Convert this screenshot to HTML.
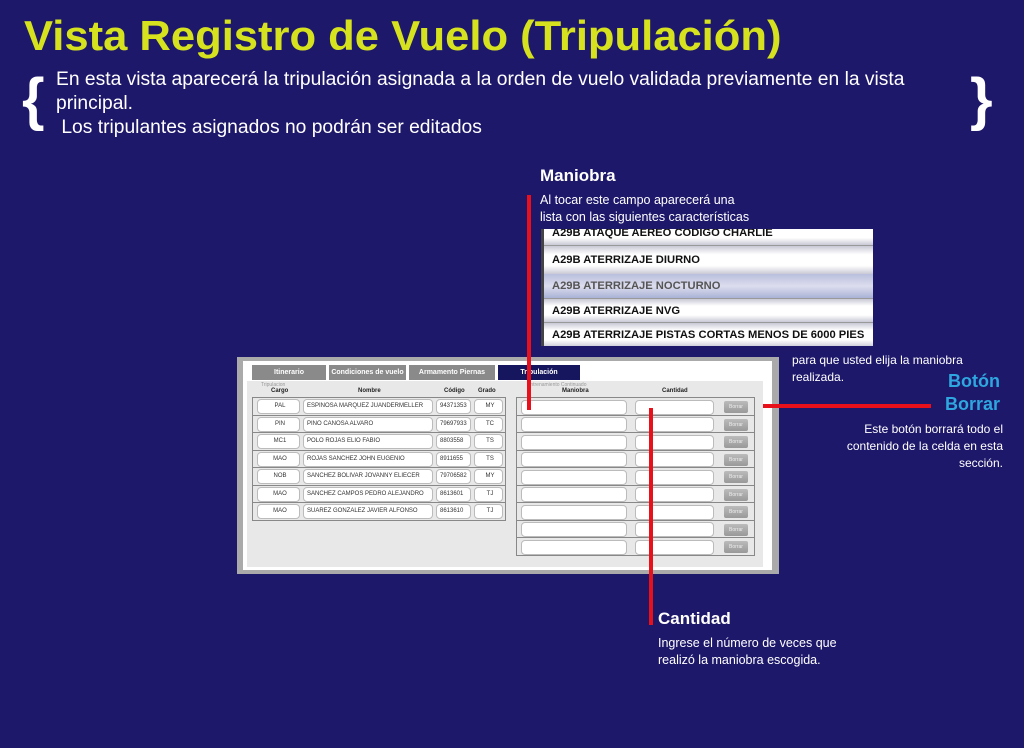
<!DOCTYPE html>
<html><head><meta charset="utf-8"><style>
*{margin:0;padding:0;box-sizing:border-box}
body{width:1024px;height:748px;background:#1e186b;position:relative;overflow:hidden;font-family:"Liberation Sans",sans-serif;color:#fff}
.a{position:absolute}
.t{white-space:nowrap}
.cell{position:absolute;background:#fff;border:1px solid #bbb;border-radius:4px;height:15px;font-size:6px;color:#333;line-height:13px;padding-left:3px}
.row{position:absolute;border-bottom:1px solid #888;border-left:1px solid #888;border-right:1px solid #888;height:17.5px}
.btn{position:absolute;width:24px;height:12px;border-radius:2px;background:linear-gradient(#bbb,#999);font-size:5px;color:#eee;text-align:center;line-height:12px}
.tab{position:absolute;top:365px;height:15px;background:#8a8a8a;color:#fff;font-size:7px;font-weight:bold;text-align:center;line-height:15px}
.dd{position:absolute;left:0;width:332px;height:24.5px;font-size:11.2px;font-weight:bold;color:#111;padding-left:8px;line-height:24px;background:linear-gradient(#c9c9d6,#fff 30%,#fff 70%,#c9c9d6);border-bottom:1px solid #999}
</style></head><body>
<div class="a t" style="left:24px;top:12px;font-size:42px;font-weight:bold;color:#d5e21d;transform:scaleX(1.037);transform-origin:0 0">Vista Registro de Vuelo (Tripulación)</div>
<div class="a" style="left:22px;top:66px;font-size:58px;font-weight:bold">{</div>
<div class="a" style="left:970px;top:66px;font-size:58px;font-weight:bold">}</div>
<div class="a t" style="left:56px;top:68px;font-size:19px;line-height:24px;transform:scaleX(1.013);transform-origin:0 0">En esta vista aparecerá la tripulación asignada a la orden de vuelo validada previamente en la vista<br>principal.<br>&nbsp;Los tripulantes asignados no podrán ser editados</div>

<div class="a t" style="left:540px;top:166px;font-size:17px;font-weight:bold">Maniobra</div>
<div class="a t" style="left:540px;top:192px;font-size:12.5px;line-height:17px">Al tocar este campo aparecerá una<br>lista con las siguientes características</div>

<div class="a" style="left:541px;top:229px;width:332px;height:117px;overflow:hidden;border-left:3px solid #444">
<div class="dd" style="top:-8px">A29B ATAQUE AEREO CODIGO CHARLIE</div>
<div class="dd" style="top:16.5px;height:29px;line-height:29px">A29B ATERRIZAJE DIURNO</div>
<div class="dd" style="top:45px;background:linear-gradient(#b9bfdc,#dde 50%,#aab3d6);color:#555">A29B ATERRIZAJE NOCTURNO</div>
<div class="dd" style="top:69.5px">A29B ATERRIZAJE NVG</div>
<div class="dd" style="top:94px">A29B ATERRIZAJE PISTAS CORTAS MENOS DE 6000 PIES</div>
</div>

<div class="a t" style="left:792px;top:352px;font-size:12px;line-height:17px">para que usted elija la maniobra<br>realizada.</div>
<div class="a t" style="left:900px;top:370px;width:100px;text-align:right;font-size:18px;font-weight:bold;color:#2ea6df;line-height:23px">Botón<br>Borrar</div>
<div class="a t" style="left:800px;top:421px;width:203px;text-align:right;font-size:12px;line-height:17px">Este botón borrará todo el<br>contenido de la celda en esta<br>sección.</div>

<div class="a t" style="left:658px;top:609px;font-size:17px;font-weight:bold">Cantidad</div>
<div class="a t" style="left:658px;top:635px;font-size:12.5px;line-height:17px">Ingrese el número de veces que<br>realizó la maniobra escogida.</div>

<div class="a" style="left:237px;top:357px;width:542px;height:217px;background:#aaa"></div>
<div class="a" style="left:243px;top:361px;width:529px;height:209px;background:#fff"></div>
<div class="a" style="left:247px;top:381px;width:516px;height:186px;background:#e8e8e8"></div>
<div class="tab" style="left:252px;width:74px">Itinerario</div>
<div class="tab" style="left:329px;width:77px">Condiciones de vuelo</div>
<div class="tab" style="left:409px;width:86px">Armamento Piernas</div>
<div class="tab" style="left:498px;width:82px;background:#16165e">Tripulación</div>
<div class="a t" style="left:261px;top:382px;font-size:5px;color:#999">Tripulacion</div>
<div class="a t" style="left:271px;top:388px;font-size:6px;color:#222;font-weight:bold">Cargo</div>
<div class="a t" style="left:358px;top:388px;font-size:6px;color:#222;font-weight:bold">Nombre</div>
<div class="a t" style="left:444px;top:388px;font-size:6px;color:#222;font-weight:bold">Código</div>
<div class="a t" style="left:478px;top:388px;font-size:6px;color:#222;font-weight:bold">Grado</div>
<div class="a t" style="left:527px;top:382px;font-size:5px;color:#999">Entrenamiento Continuado</div>
<div class="a t" style="left:562px;top:388px;font-size:6px;color:#222;font-weight:bold">Maniobra</div>
<div class="a t" style="left:662px;top:388px;font-size:6px;color:#222;font-weight:bold">Cantidad</div>
<div class="a" style="left:252px;top:397px;width:254px;height:1px;background:#888"></div>
<div class="a" style="left:516px;top:397px;width:239px;height:1px;background:#888"></div>

<div class="row" style="left:252px;top:398px;width:254px"></div>
<div class="row" style="left:252px;top:415.5px;width:254px"></div>
<div class="row" style="left:252px;top:433px;width:254px"></div>
<div class="row" style="left:252px;top:450.5px;width:254px"></div>
<div class="row" style="left:252px;top:468px;width:254px"></div>
<div class="row" style="left:252px;top:485.5px;width:254px"></div>
<div class="row" style="left:252px;top:503px;width:254px"></div>

<div class="cell" style="left:257px;top:399px;width:43px;text-align:center">PAL</div><div class="cell" style="left:303px;top:399px;width:130px">ESPINOSA MARQUEZ JUANDERMELLER</div><div class="cell" style="left:436px;top:399px;width:35px">94371353</div><div class="cell" style="left:474px;top:399px;width:29px;text-align:center">MY</div>
<div class="cell" style="left:257px;top:416.5px;width:43px;text-align:center">PIN</div><div class="cell" style="left:303px;top:416.5px;width:130px">PINO CANOSA ALVARO</div><div class="cell" style="left:436px;top:416.5px;width:35px">79697933</div><div class="cell" style="left:474px;top:416.5px;width:29px;text-align:center">TC</div>
<div class="cell" style="left:257px;top:434px;width:43px;text-align:center">MC1</div><div class="cell" style="left:303px;top:434px;width:130px">POLO ROJAS ELIO FABIO</div><div class="cell" style="left:436px;top:434px;width:35px">8803558</div><div class="cell" style="left:474px;top:434px;width:29px;text-align:center">TS</div>
<div class="cell" style="left:257px;top:451.5px;width:43px;text-align:center">MAO</div><div class="cell" style="left:303px;top:451.5px;width:130px">ROJAS SANCHEZ JOHN EUGENIO</div><div class="cell" style="left:436px;top:451.5px;width:35px">8911655</div><div class="cell" style="left:474px;top:451.5px;width:29px;text-align:center">TS</div>
<div class="cell" style="left:257px;top:469px;width:43px;text-align:center">NOB</div><div class="cell" style="left:303px;top:469px;width:130px">SANCHEZ BOLIVAR JOVANNY ELIECER</div><div class="cell" style="left:436px;top:469px;width:35px">79706582</div><div class="cell" style="left:474px;top:469px;width:29px;text-align:center">MY</div>
<div class="cell" style="left:257px;top:486.5px;width:43px;text-align:center">MAO</div><div class="cell" style="left:303px;top:486.5px;width:130px">SANCHEZ CAMPOS PEDRO ALEJANDRO</div><div class="cell" style="left:436px;top:486.5px;width:35px">8613601</div><div class="cell" style="left:474px;top:486.5px;width:29px;text-align:center">TJ</div>
<div class="cell" style="left:257px;top:504px;width:43px;text-align:center">MAO</div><div class="cell" style="left:303px;top:504px;width:130px">SUAREZ GONZALEZ JAVIER ALFONSO</div><div class="cell" style="left:436px;top:504px;width:35px">8613610</div><div class="cell" style="left:474px;top:504px;width:29px;text-align:center">TJ</div>

<div class="row" style="left:516px;top:398px;width:239px"></div><div class="cell" style="left:521px;top:399.5px;width:106px"></div><div class="cell" style="left:635px;top:399.5px;width:79px"></div><div class="btn" style="left:724px;top:401px">Borrar</div>
<div class="row" style="left:516px;top:415.5px;width:239px"></div><div class="cell" style="left:521px;top:417px;width:106px"></div><div class="cell" style="left:635px;top:417px;width:79px"></div><div class="btn" style="left:724px;top:418.5px">Borrar</div>
<div class="row" style="left:516px;top:433px;width:239px"></div><div class="cell" style="left:521px;top:434.5px;width:106px"></div><div class="cell" style="left:635px;top:434.5px;width:79px"></div><div class="btn" style="left:724px;top:436px">Borrar</div>
<div class="row" style="left:516px;top:450.5px;width:239px"></div><div class="cell" style="left:521px;top:452px;width:106px"></div><div class="cell" style="left:635px;top:452px;width:79px"></div><div class="btn" style="left:724px;top:453.5px">Borrar</div>
<div class="row" style="left:516px;top:468px;width:239px"></div><div class="cell" style="left:521px;top:469.5px;width:106px"></div><div class="cell" style="left:635px;top:469.5px;width:79px"></div><div class="btn" style="left:724px;top:471px">Borrar</div>
<div class="row" style="left:516px;top:485.5px;width:239px"></div><div class="cell" style="left:521px;top:487px;width:106px"></div><div class="cell" style="left:635px;top:487px;width:79px"></div><div class="btn" style="left:724px;top:488.5px">Borrar</div>
<div class="row" style="left:516px;top:503px;width:239px"></div><div class="cell" style="left:521px;top:504.5px;width:106px"></div><div class="cell" style="left:635px;top:504.5px;width:79px"></div><div class="btn" style="left:724px;top:506px">Borrar</div>
<div class="row" style="left:516px;top:520.5px;width:239px"></div><div class="cell" style="left:521px;top:522px;width:106px"></div><div class="cell" style="left:635px;top:522px;width:79px"></div><div class="btn" style="left:724px;top:523.5px">Borrar</div>
<div class="row" style="left:516px;top:538px;width:239px"></div><div class="cell" style="left:521px;top:539.5px;width:106px"></div><div class="cell" style="left:635px;top:539.5px;width:79px"></div><div class="btn" style="left:724px;top:541px">Borrar</div>

<div class="a" style="left:527px;top:195px;width:4px;height:215px;background:#e8101a"></div>
<div class="a" style="left:649px;top:408px;width:4px;height:217px;background:#e8101a"></div>
<div class="a" style="left:763px;top:404px;width:168px;height:4px;background:#e8101a"></div>
</body></html>
